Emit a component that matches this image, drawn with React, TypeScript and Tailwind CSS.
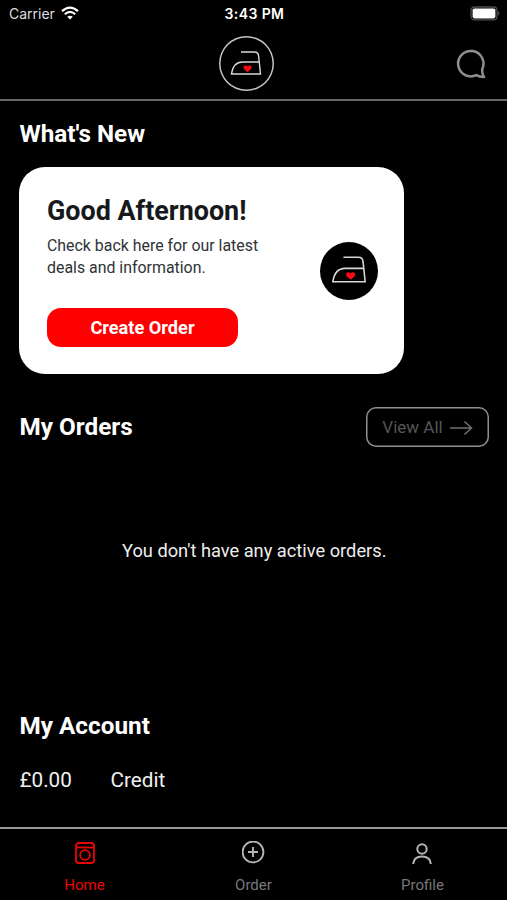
import React from "react";

interface IconProps {
  className?: string;
}

interface TabProps {
  label: string;
  active?: boolean;
  children: React.ReactNode;
}

const IronLogo: React.FC<IconProps> = ({ className }) => (
  <svg viewBox="0 0 32 26" fill="none" className={className}>
    <path d="M11 2H24.5Q28.3 2 28.6 6L30.5 24H1.5C2.6 16.5 6.5 12 12.5 12H29" stroke="#d8d8d8" strokeWidth="1.4" />
    <path d="M17.5 22.2L13.7 18.8Q12.7 16.6 14.6 15.6Q16.4 15 17.5 16.3Q18.6 15 20.4 15.6Q22.3 16.6 21.3 18.8Z" fill="#fa0a14" />
  </svg>
);

const WifiIcon: React.FC<IconProps> = ({ className }) => (
  <svg viewBox="0 0 18 14" fill="none" className={className}>
    <path d="M1 5.2Q9 -2 17 5.2" stroke="white" strokeWidth="2.3" />
    <path d="M3.8 8.2Q9 3.6 14.2 8.2" stroke="white" strokeWidth="2.1" />
    <path d="M9 13.6L6.2 10.8Q9 8.6 11.8 10.8Z" fill="white" />
  </svg>
);

const BatteryIcon: React.FC<IconProps> = ({ className }) => (
  <svg viewBox="0 0 31 15" fill="none" className={className}>
    <rect x="2" y="1" width="26" height="12.8" rx="3.4" stroke="#505050" strokeWidth="1.3" />
    <rect x="3.6" y="2.4" width="22.8" height="10" rx="1.8" fill="white" />
    <path d="M29.2 5Q31.2 7.4 29.2 9.8Z" fill="#666" />
  </svg>
);

const ChatIcon: React.FC<IconProps> = ({ className }) => (
  <svg viewBox="0 0 30 30" fill="none" className={className}>
    <path
      d="M26.2 20.2A12.7 12.7 0 1 0 20.2 26.1Q23.5 28 28 28Q25.8 24.5 26.2 20.2Z"
      stroke="#8e8e93"
      strokeWidth="2.5"
      strokeLinejoin="round"
    />
  </svg>
);

const Tab: React.FC<TabProps> = ({ label, active, children }) => (
  <button
    type="button"
    className={`flex flex-1 flex-col items-center pt-3 ${active ? "text-[#ec0505]" : "text-[#77777b]"}`}
  >
    {children}
    <span className="mt-[10px] text-[15px] leading-5">{label}</span>
  </button>
);

const App: React.FC = () => {
  return (
    <div className="flex h-[900px] w-[507px] flex-col overflow-hidden bg-black font-['Roboto',sans-serif] text-white">
      {/* Status bar */}
      <div className="grid h-7 shrink-0 grid-cols-3 items-center pr-[7px] pl-[9px] font-['Inter',sans-serif] text-[14px]">
        <div className="-mt-px flex items-center gap-[6px] text-[#dedede]">
          <span>Carrier</span>
          <WifiIcon className="-mt-px h-[14px] w-[18px]" />
        </div>
        <span className="-mt-[2px] text-center font-semibold tracking-[0.4px]">3:43 PM</span>
        <BatteryIcon className="-mt-[2px] h-[15px] w-[31px] justify-self-end" />
      </div>

      {/* Header */}
      <header className="grid h-[73px] shrink-0 grid-cols-3 items-center border-b-2 border-[#666] pr-[21px] pl-[7px]">
        <div />
        <div className="flex h-[55px] w-[55px] items-center justify-center justify-self-center rounded-full shadow-[inset_0_0_0_1.5px_#c4c4c4]">
          <IronLogo className="-mt-px h-[26px] w-8" />
        </div>
        <ChatIcon className="h-[30px] w-[30px] justify-self-end" />
      </header>

      <main className="flex flex-1 flex-col pr-[18px] pl-[19.5px]">
        <h2 className="mt-4 text-[24.3px] leading-[33px] font-bold">What's New</h2>

        <section className="mt-[17px] -ml-[0.5px] flex h-[207px] w-[385px] items-center justify-between rounded-[26px] bg-white pr-[26px] pl-7">
          <div>
            <h1 className="text-[26.9px] leading-8 font-bold text-[#16191c]">Good Afternoon!</h1>
            <p className="mt-2 w-[230px] text-[15.9px] leading-[22px] text-[#303336]">
              Check back here for our latest deals and information.
            </p>
            <button type="button" className="mt-[29px] h-[39px] w-[191px] rounded-[14px] bg-[#ff0000] pt-px text-[18.2px] font-bold">
              Create Order
            </button>
          </div>
          <div className="flex h-[58px] w-[58px] items-center justify-center rounded-full bg-black">
            <IronLogo className="-mt-[3px] h-[29px] w-9" />
          </div>
        </section>

        <div className="mt-[33px] flex items-center justify-between">
          <h2 className="text-[24.3px] leading-8 font-bold">My Orders</h2>
          <button
            type="button"
            className="flex h-10 w-[123px] items-center justify-center gap-[6px] rounded-[10px] pt-px text-[17px] text-[#555] shadow-[inset_0_0_0_1.5px_#909090]"
          >
            View All
            <svg viewBox="0 0 24 16" fill="none" className="h-4 w-6">
              <path d="M1 8H22.5M15.5 1.5L22.5 8L15.5 14.5" stroke="#707070" strokeWidth="1.5" />
            </svg>
          </button>
        </div>

        <p className="mt-[92px] text-center text-[18.25px] leading-6 text-[#eee]">You don't have any active orders.</p>

        <h2 className="mt-[147px] text-[24.3px] leading-8 font-bold">My Account</h2>
        <div className="mt-6 flex text-[20.7px] leading-7 text-[#f0f0f0]">
          <span className="w-[91px]">£0.00</span>
          <span>Credit</span>
        </div>
      </main>

      {/* Tab bar */}
      <nav className="flex h-[73px] shrink-0 border-t-2 border-[#999]">
        <Tab label="Home" active>
          <svg viewBox="0 0 24 24" fill="none" stroke="currentColor" strokeWidth="1.8" className="h-6 w-6">
            <rect x="3" y="2" width="18" height="20" rx="3" />
            <path d="M3 6.5H21" />
            <circle cx="12" cy="14" r="4.9" />
          </svg>
        </Tab>
        <Tab label="Order">
          <svg viewBox="1 1 24 24" fill="none" stroke="#b5b5b5" strokeWidth="1.9" className="h-6 w-6">
            <circle cx="12" cy="12" r="10.4" />
            <path d="M12 7V17M7 12H17" />
          </svg>
        </Tab>
        <Tab label="Profile">
          <svg viewBox="1 0 24 24" fill="none" stroke="#b5b5b5" strokeWidth="2" className="h-6 w-6 overflow-visible">
            <circle cx="12" cy="8" r="4.7" />
            <path d="M3.2 23Q3.6 15.4 12 15.4Q20.4 15.4 20.8 23" />
          </svg>
        </Tab>
      </nav>
    </div>
  );
};

export default App;
